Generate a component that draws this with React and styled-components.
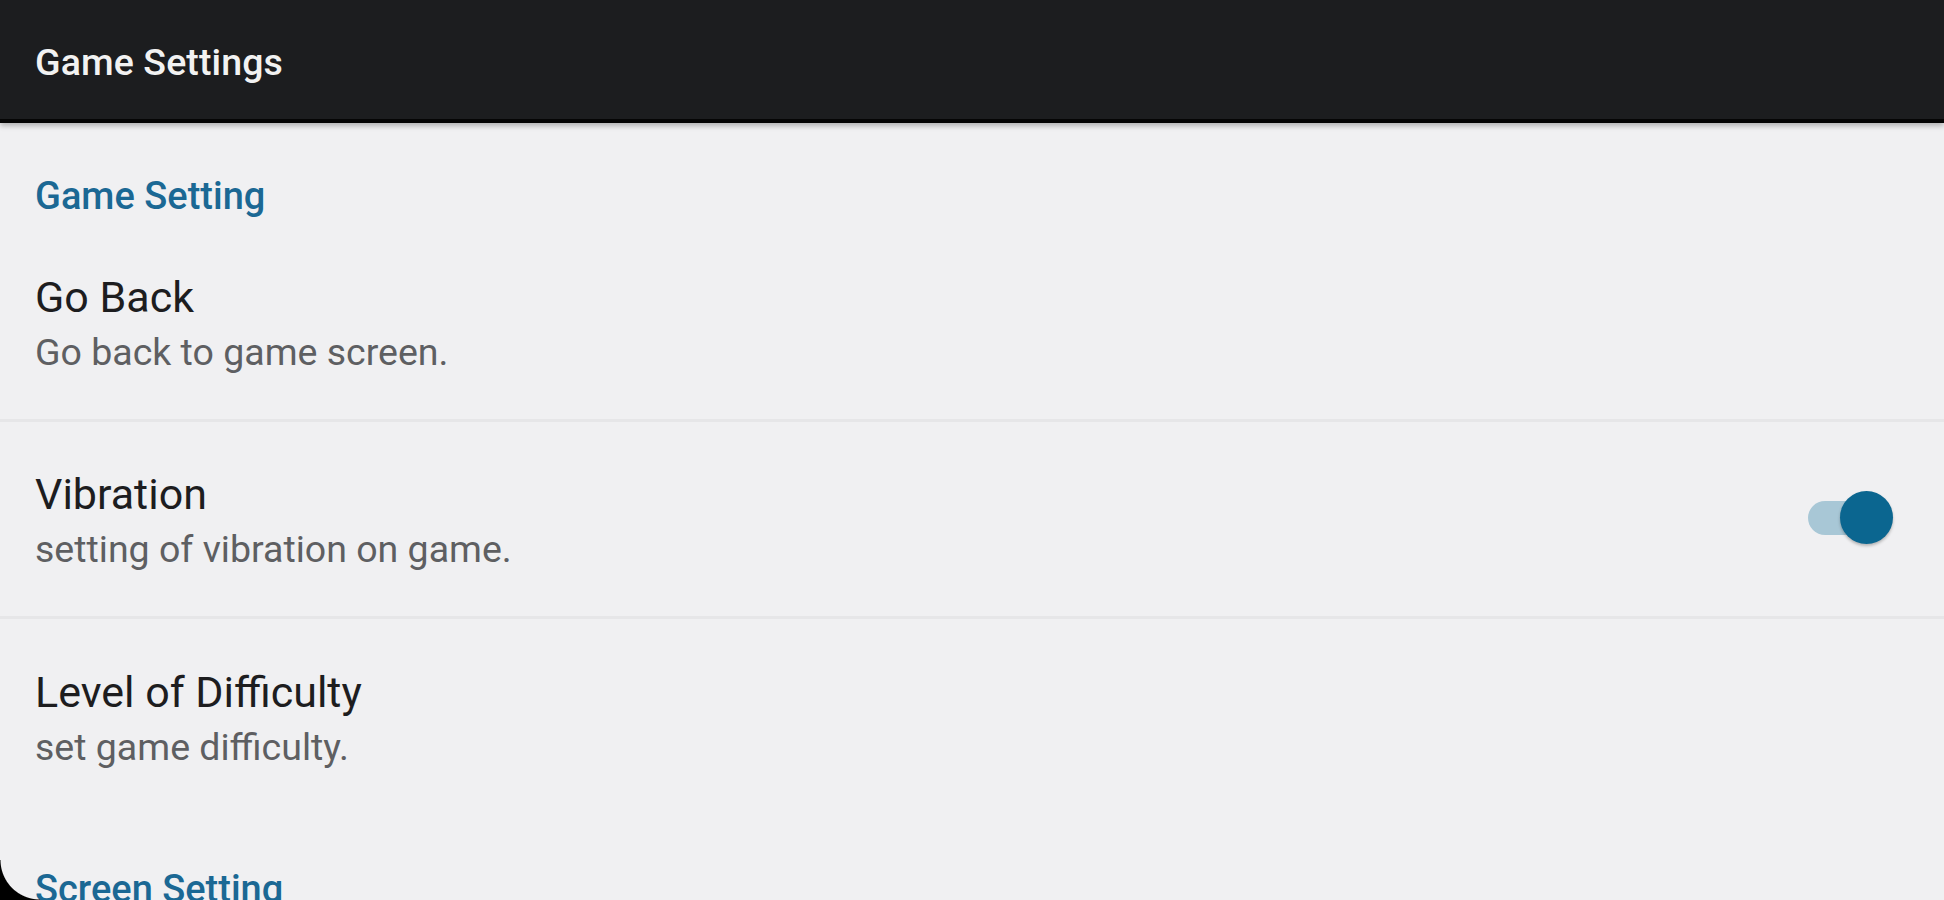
import React from 'react';
import styled, { createGlobalStyle } from 'styled-components';

const GlobalStyle = createGlobalStyle`
  html, body {
    margin: 0;
    padding: 0;
    height: 900px;
    overflow: hidden;
    background: #f0f0f2;
    font-family: Roboto, "Noto Sans", "Liberation Sans", sans-serif;
  }
`;

const Screen = styled.div`
  position: relative;
  width: 100%;
  height: 900px;
  overflow: hidden;
  background: #f0f0f2;
`;

const Toolbar = styled.header`
  height: 119px;
  background: #1c1d1f;
  display: flex;
  align-items: center;
  padding: 0 0 0 35px;
  border-bottom: 4px solid #050505;
  box-shadow: 0 3px 5px rgba(0, 0, 0, 0.25);
  position: relative;
  z-index: 1;
`;

const ToolbarTitle = styled.h1`
  margin: 0;
  margin-top: 4px;
  font-size: 37.5px;
  font-weight: 500;
  color: #f2f2f2;
  letter-spacing: 0.1px;
`;

const Category = styled.section`
  display: flex;
  flex-direction: column;
`;

const CategoryTitle = styled.h2`
  margin: 0;
  height: 102px;
  box-sizing: border-box;
  padding: 51px 0 0 35px;
  font-size: 38px;
  font-weight: 500;
  color: #1b6894;
  line-height: 44px;
`;

const Row = styled.div`
  height: 197px;
  box-sizing: border-box;
  display: flex;
  align-items: center;
  justify-content: space-between;
  padding: 1px 40px 0 35px;
  border-bottom: ${p => (p.$last ? 'none' : '3px solid #e6e6e8')};
`;

const Texts = styled.div`
  display: flex;
  flex-direction: column;
  gap: 8px;
`;

const ItemTitle = styled.div`
  font-size: 43px;
  line-height: 50px;
  color: #1d1d1f;
`;

const ItemSummary = styled.div`
  font-size: 37.5px;
  line-height: 44px;
  color: #5e5f62;
`;

const Track = styled.div`
  position: relative;
  width: 78px;
  height: 34px;
  border-radius: 17px;
  background: ${p => (p.$on ? '#a8c7d6' : '#c4c4c6')};
  margin: 0 18px 4px 0;
`;

const Thumb = styled.div`
  position: absolute;
  top: 50%;
  left: ${p => (p.$on ? '32px' : '-8px')};
  width: 53px;
  height: 53px;
  margin-top: -26.5px;
  border-radius: 50%;
  background: ${p => (p.$on ? '#0b6690' : '#fafafa')};
  box-shadow: 0 2px 3px rgba(0, 0, 0, 0.25);
`;

const Corner = styled.div`
  position: absolute;
  left: 0;
  bottom: 0;
  width: 40px;
  height: 40px;
  background: radial-gradient(circle at 100% 0, transparent 39px, #000 40px);
  z-index: 2;
`;

const Switch = ({ on }) => (
  <Track $on={on}>
    <Thumb $on={on} />
  </Track>
);

const Pref = ({ title, summary, children, last }) => (
  <Row $last={last}>
    <Texts>
      <ItemTitle>{title}</ItemTitle>
      <ItemSummary>{summary}</ItemSummary>
    </Texts>
    {children}
  </Row>
);

export default function App() {
  return (
    <Screen>
      <GlobalStyle />
      <Toolbar>
        <ToolbarTitle>Game Settings</ToolbarTitle>
      </Toolbar>
      <Category>
        <CategoryTitle>Game Setting</CategoryTitle>
        <Pref title="Go Back" summary="Go back to game screen." />
        <Pref title="Vibration" summary="setting of vibration on game.">
          <Switch on />
        </Pref>
        <Pref title="Level of Difficulty" summary="set game difficulty." last />
      </Category>
      <Category>
        <CategoryTitle>Screen Setting</CategoryTitle>
      </Category>
      <Corner />
    </Screen>
  );
}
